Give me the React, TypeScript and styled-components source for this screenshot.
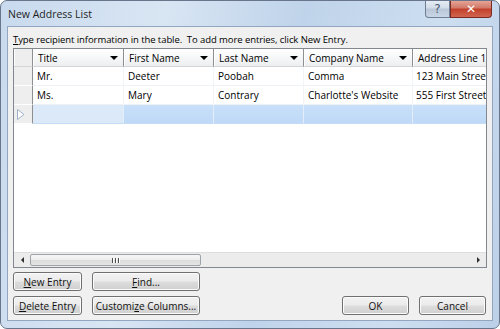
import styled, { createGlobalStyle } from "styled-components";

const COLUMNS = "19px 91px 90px 90px 109px 120px";

const columns = [
  { name: "Title", arrow: true },
  { name: "First Name", arrow: true },
  { name: "Last Name", arrow: true },
  { name: "Company Name", arrow: true },
  { name: "Address Line 1", arrow: false },
];

const rows = [
  ["Mr.", "Deeter", "Poobah", "Comma", "123 Main Street"],
  ["Ms.", "Mary", "Contrary", "Charlotte's Website", "555 First Street"],
];

const GlobalStyle = createGlobalStyle`
  html, body {
    margin: 0;
    padding: 0;
    background: #ffffff;
  }
  body {
    font-family: "Open Sans", "Noto Sans", sans-serif;
    font-size: 10px;
    color: #000;
  }
`;

const Window = styled.div`
  box-sizing: border-box;
  width: 500px;
  height: 329px;
  border: 1px solid #68758a;
  border-radius: 7px;
  background: linear-gradient(100deg, #c9daee 0%, #d8e5f3 30%, #bfd3ea 55%, #cddef0 80%, #bcd0e8 100%);
  display: flex;
  flex-direction: column;
  overflow: hidden;
`;

const TitleBar = styled.div`
  height: 25px;
  display: flex;
  align-items: flex-start;
  padding: 0 7px 0 7px;
  flex-shrink: 0;
`;

const Caption = styled.div`
  flex: 1;
  line-height: 27px;
  font-size: 10.5px;
  color: #1e1e1e;
`;

const CaptionButton = styled.div<{ $close?: boolean }>`
  box-sizing: border-box;
  width: ${(p) => (p.$close ? 42 : 25)}px;
  height: 18px;
  margin-top: -1px;
  display: flex;
  align-items: center;
  justify-content: center;
  border: 1px solid ${(p) => (p.$close ? "#7a2a22" : "#6f7f95")};
  border-top: none;
  border-radius: ${(p) => (p.$close ? "0 0 4px 0" : "0 0 0 4px")};
  background: ${(p) =>
    p.$close
      ? "linear-gradient(180deg, #e9a99c 0%, #d27b6a 45%, #c4412b 55%, #d0654f 100%)"
      : "linear-gradient(180deg, #e8eef6 0%, #d3dde9 45%, #b9c7d9 55%, #c9d6e6 100%)"};
  color: ${(p) => (p.$close ? "#ffffff" : "#4b5b70")};
  font-family: "DejaVu Sans", sans-serif;
  font-weight: ${(p) => (p.$close ? "bold" : "normal")};
  font-size: 12px;
`;

const Client = styled.div`
  flex: 1;
  margin: 0 6px 7px 6px;
  border: 1px solid #93a6bf;
  background: #f0f0f0;
  padding: 0 5px 5px 5px;
  display: flex;
  flex-direction: column;
`;

const Instruction = styled.div`
  font-size: 9.5px;
  letter-spacing: -0.08px;
  line-height: 14px;
  padding: 6px 0 1px 0;
  white-space: nowrap;
`;

const Table = styled.div`
  box-sizing: border-box;
  height: 220px;
  border: 1px solid #828790;
  background: #ffffff;
  display: flex;
  flex-direction: column;
  overflow: hidden;
`;

const Row = styled.div<{ $height: number }>`
  display: grid;
  grid-template-columns: ${COLUMNS};
  height: ${(p) => p.$height}px;
  flex-shrink: 0;
`;

const HeaderCell = styled.div`
  box-sizing: border-box;
  display: flex;
  align-items: center;
  justify-content: space-between;
  padding: 0 5px 0 5px;
  white-space: nowrap;
  overflow: hidden;
  background: linear-gradient(180deg, #ffffff 0%, #f7f8f9 45%, #eceef0 100%);
  border-right: 1px solid #8e8f91;
  border-bottom: 1px solid #d5d5d5;
  box-shadow: inset 1px 0 0 #ffffff;
`;

const CornerCell = styled(HeaderCell)`
  background: #eeeeee;
`;

const DropArrow = styled.span`
  width: 0;
  height: 0;
  border-left: 4px solid transparent;
  border-right: 4px solid transparent;
  border-top: 4px solid #000;
  margin-top: 1px;
`;

const RowHead = styled.div`
  box-sizing: border-box;
  display: flex;
  align-items: center;
  padding-left: 3px;
  background: #eeeeee;
  border-right: 1px solid #8e8f91;
  border-bottom: 1px solid #ffffff;
`;

const Cell = styled.div<{ $selected?: boolean; $current?: boolean }>`
  box-sizing: border-box;
  display: flex;
  align-items: center;
  padding-left: 4px;
  white-space: nowrap;
  overflow: hidden;
  border-right: 1px solid ${(p) => (p.$selected ? "#e3eefa" : "#f2f4f7")};
  border-bottom: 1px solid ${(p) => (p.$selected ? "#c4dcf6" : "#eef2f6")};
  background: ${(p) =>
    p.$current ? "#dce9f8" : p.$selected ? "linear-gradient(180deg, #c9e0f9 0%, #bed9f7 100%)" : "#ffffff"};
  &:nth-child(6) {
    padding-left: 3px;
  }
`;

const Filler = styled.div`
  flex: 1;
`;

const ScrollBar = styled.div`
  height: 14px;
  flex-shrink: 0;
  display: flex;
  align-items: center;
  background: #ececec;
  border-top: 1px solid #dedede;
`;

const ScrollArrow = styled.div<{ $right?: boolean }>`
  width: 16px;
  display: flex;
  justify-content: center;
  &::before {
    content: "";
    width: 0;
    height: 0;
    border-top: 3px solid transparent;
    border-bottom: 3px solid transparent;
    ${(p) => (p.$right ? "border-left: 3px solid #2f2f2f;" : "border-right: 3px solid #2f2f2f;")}
  }
`;

const Thumb = styled.div`
  box-sizing: border-box;
  width: 171px;
  height: 12px;
  border: 1px solid #9da3ab;
  border-radius: 2px;
  background: linear-gradient(180deg, #f6f6f6 0%, #ececec 50%, #dcdcdc 51%, #e4e4e4 100%);
  display: flex;
  align-items: center;
  justify-content: center;
  gap: 1px;
`;

const Grip = styled.span`
  width: 1px;
  height: 5px;
  background: #4d4d4d;
  border-right: 1px solid #ffffff;
`;

const Track = styled.div`
  flex: 1;
`;

const Buttons = styled.div`
  margin-top: 4px;
  display: grid;
  grid-template-columns: 69px 108px 1fr 67px 67px;
  grid-template-rows: 19px 19px;
  column-gap: 10px;
  row-gap: 5px;
  padding-right: 1px;
`;

const Button = styled.div<{ $col: number; $row: number }>`
  grid-column: ${(p) => p.$col};
  grid-row: ${(p) => p.$row};
  box-sizing: border-box;
  display: flex;
  align-items: center;
  justify-content: center;
  border: 1px solid #707070;
  border-radius: 3px;
  background: linear-gradient(180deg, #f2f2f2 0%, #ebebeb 48%, #dddddd 52%, #cfcfcf 100%);
  box-shadow: inset 0 0 0 1px #fbfbfb;
  white-space: nowrap;
  color: #111;
`;

const Key = styled.span`
  text-decoration: underline;
`;

export default function App() {
  return (
    <>
      <GlobalStyle />
      <Window>
        <TitleBar>
          <Caption>New Address List</Caption>
          <CaptionButton>?</CaptionButton>
          <CaptionButton $close>✕</CaptionButton>
        </TitleBar>
        <Client>
          <Instruction>
            <Key>T</Key>ype recipient information in the table.&nbsp; To add more entries, click New Entry.
          </Instruction>
          <Table>
            <Row $height={18}>
              <CornerCell />
              {columns.map((c) => (
                <HeaderCell key={c.name}>
                  {c.name}
                  {c.arrow && <DropArrow />}
                </HeaderCell>
              ))}
            </Row>
            {rows.map((r) => (
              <Row $height={19} key={r[0]}>
                <RowHead />
                {r.map((v) => (
                  <Cell key={v}>{v}</Cell>
                ))}
              </Row>
            ))}
            <Row $height={19}>
              <RowHead>
                <svg width="8" height="11" viewBox="0 0 8 11">
                  <path d="M0.5 0.5 L7 5.5 L0.5 10.5 Z" fill="#ffffff" stroke="#9fb2c8" />
                </svg>
              </RowHead>
              <Cell $selected $current />
              <Cell $selected />
              <Cell $selected />
              <Cell $selected />
              <Cell $selected />
            </Row>
            <Filler />
            <ScrollBar>
              <ScrollArrow />
              <Thumb>
                <Grip />
                <Grip />
                <Grip />
              </Thumb>
              <Track />
              <ScrollArrow $right />
            </ScrollBar>
          </Table>
          <Buttons>
            <Button $col={1} $row={1}>
              <span>
                <Key>N</Key>ew Entry
              </span>
            </Button>
            <Button $col={2} $row={1}>
              <span>
                <Key>F</Key>ind...
              </span>
            </Button>
            <Button $col={1} $row={2}>
              <span>
                <Key>D</Key>elete Entry
              </span>
            </Button>
            <Button $col={2} $row={2}>
              <span>
                Customi<Key>z</Key>e Columns...
              </span>
            </Button>
            <Button $col={4} $row={2}>OK</Button>
            <Button $col={5} $row={2}>Cancel</Button>
          </Buttons>
        </Client>
      </Window>
    </>
  );
}
